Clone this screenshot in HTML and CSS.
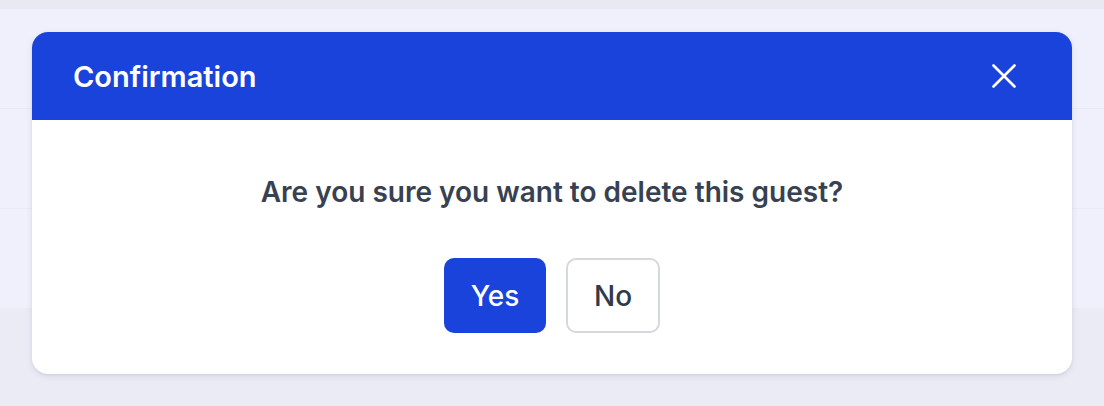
FILE: index.html
```html
<!DOCTYPE html>
<html>
<head>
<meta charset="utf-8">
<link rel="stylesheet" href="styles.css">
</head>
<body>
<div class="page">
  <div class="topbar"></div>
  <div class="row"></div>
  <div class="row"></div>
  <div class="row"></div>
  <div class="footer"></div>
</div>
<div class="overlay">
  <div class="dialog">
    <div class="dialog-header">
      <h2 class="dialog-title">Confirmation</h2>
      <button class="close-btn" aria-label="Close">
        <svg width="24" height="24" viewBox="0 0 24 24" fill="none" stroke="#fff" stroke-width="2.6" stroke-linecap="round">
          <path d="M1.5 1.5 L22.5 22.5 M22.5 1.5 L1.5 22.5"/>
        </svg>
      </button>
    </div>
    <div class="dialog-body">
      <p class="message">Are you sure you want to delete this guest?</p>
      <div class="actions">
        <button class="btn btn-yes">Yes</button>
        <button class="btn btn-no">No</button>
      </div>
    </div>
  </div>
</div>
</body>
</html>
```
FILE: styles.css
```css
html, body {
  margin: 0;
  padding: 0;
}
body {
  width: 1104px;
  height: 406px;
  overflow: hidden;
  position: relative;
  font-family: Inter, "Liberation Sans", sans-serif;
  background: #eaebf5;
}
.page {
  display: flex;
  flex-direction: column;
  height: 100%;
}
.topbar {
  height: 9px;
  background: #e8e9f1;
}
.row {
  height: 100px;
  background: #eff0fb;
  border-bottom: 1px solid #e9eaf5;
  box-sizing: border-box;
}
.footer {
  flex: 1;
  background: #eaebf5;
}
.overlay {
  position: absolute;
  inset: 0;
  padding: 32px;
  box-sizing: border-box;
}
.dialog {
  height: 342px;
  background: #fff;
  border-radius: 16px;
  overflow: hidden;
  box-shadow: 0 2px 6px rgba(40, 44, 80, 0.10), 0 1px 2px rgba(40, 44, 80, 0.06);
  display: flex;
  flex-direction: column;
}
.dialog-header {
  height: 88px;
  background: #1a43dc;
  display: flex;
  align-items: center;
  justify-content: space-between;
  padding: 0 56px 0 41px;
  flex-shrink: 0;
}
.dialog-title {
  margin: 0;
  color: #fff;
  font-size: 29px;
  font-weight: 600;
}
.close-btn {
  background: none;
  border: 0;
  padding: 0;
  width: 24px;
  height: 24px;
  display: flex;
  cursor: pointer;
}
.dialog-body {
  flex: 1;
  display: flex;
  flex-direction: column;
  align-items: center;
  padding-top: 54px;
}
.message {
  margin: 0;
  color: #374151;
  font-size: 28px;
  font-weight: 600;
  line-height: 36px;
}
.actions {
  display: flex;
  gap: 20px;
  margin-top: 48px;
}
.btn {
  height: 75px;
  border-radius: 10px;
  font-family: Inter, "Liberation Sans", sans-serif;
  font-size: 28px;
  font-weight: 500;
  box-sizing: border-box;
  cursor: pointer;
}
.btn-yes {
  width: 102px;
  background: #1a43dc;
  color: #fff;
  border: 0;
}
.btn-no {
  width: 94px;
  background: #fff;
  color: #2f3a4c;
  border: 2px solid #d5d8de;
}
```
